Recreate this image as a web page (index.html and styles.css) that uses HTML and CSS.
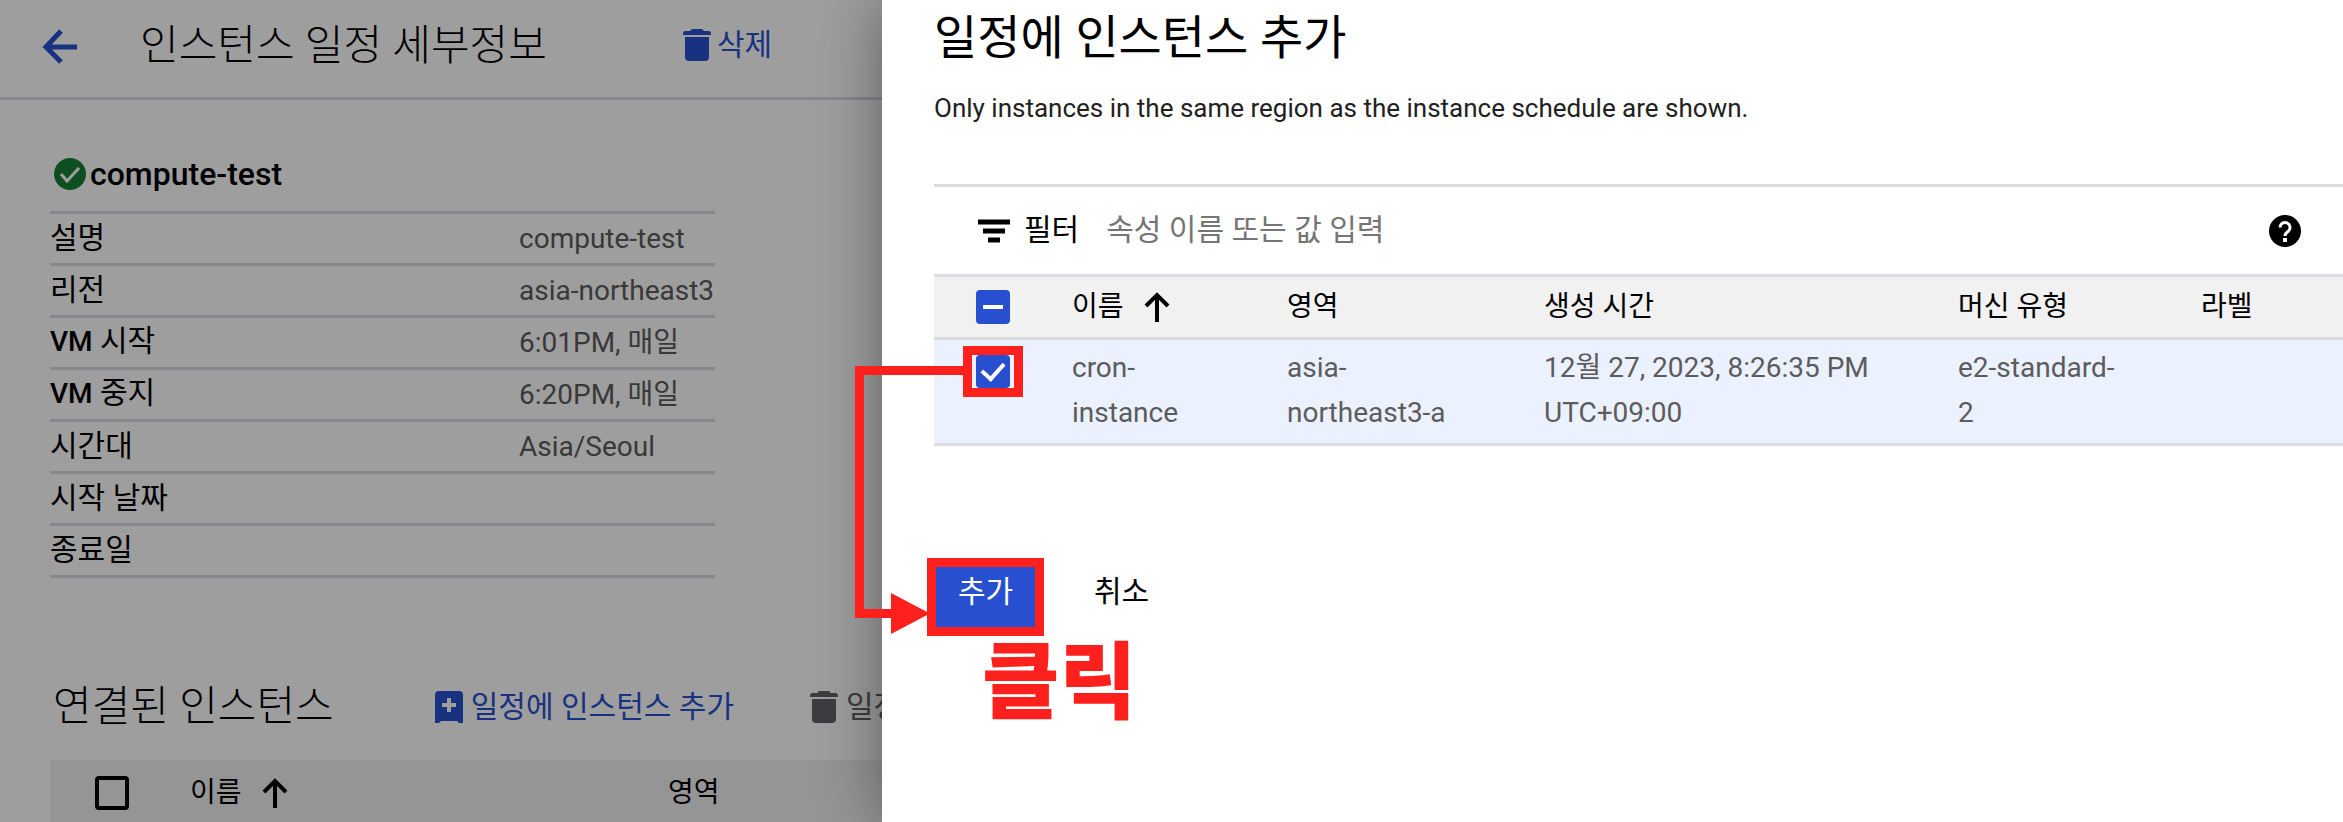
FILE: index.html
```html
<!DOCTYPE html>
<html lang="ko">
<head>
<meta charset="utf-8">
<title>인스턴스 일정 세부정보</title>
<link rel="stylesheet" href="styles.css">
</head>
<body>
<div class="app">
  <main class="page">
    <header class="page-header">
      <button class="icon-button" aria-label="뒤로">
        <svg class="back-icon" viewBox="0 0 36 36"><path d="M19 3 4 19l15 15M4 19h31" fill="none" stroke="currentColor" stroke-width="5"/></svg>
      </button>
      <h1 class="page-title">인스턴스 일정 세부정보</h1>
      <button class="action">
        <svg class="action-icon" viewBox="0 0 28 32"><path d="M9 0h10l2 2h5q2 0 2 4H0q0-4 2-4h5zM2 8h24v20q0 4-4 4H6q-4 0-4-4z" fill="currentColor"/></svg>
        삭제
      </button>
    </header>
    <section class="details">
      <h2 class="resource">
        <svg class="status-icon" viewBox="0 0 32 32"><circle cx="16" cy="16" r="16" fill="#188038"/><path d="m7 16 6 7L25 10" fill="none" stroke="#fff" stroke-width="3"/></svg>
        compute-test
      </h2>
      <table class="facts">
        <tbody>
          <tr><th scope="row">설명</th><td>compute-test</td></tr>
          <tr><th scope="row">리전</th><td>asia-northeast3</td></tr>
          <tr><th scope="row"><b>VM</b> 시작</th><td>6:01PM, 매일</td></tr>
          <tr><th scope="row"><b>VM</b> 중지</th><td>6:20PM, 매일</td></tr>
          <tr><th scope="row">시간대</th><td>Asia/Seoul</td></tr>
          <tr><th scope="row">시작 날짜</th><td></td></tr>
          <tr><th scope="row">종료일</th><td></td></tr>
        </tbody>
      </table>
    </section>
    <section class="attached">
      <div class="attached-header">
        <h2 class="attached-title">연결된 인스턴스</h2>
        <button class="action">
          <svg class="action-icon" viewBox="0 0 28 32"><path fill-rule="evenodd" d="M4 0h20q4 0 4 4v28h-4l-2-2H6l-2 2H0V4q0-4 4-4zM12 7v5H7v4h5v5h4v-5h5v-4h-5V7z" fill="currentColor"/></svg>
          일정에 인스턴스 추가
        </button>
        <button class="action action-disabled">
          <svg class="action-icon" viewBox="0 0 28 32"><path d="M9 0h10l2 2h5q2 0 2 4H0q0-4 2-4h5zM2 8h24v20q0 4-4 4H6q-4 0-4-4z" fill="currentColor"/></svg>
          일정
        </button>
      </div>
      <table class="grid attached-grid">
        <thead>
          <tr>
            <th class="check-cell"><input class="check" type="checkbox" aria-label="모두 선택"></th>
            <th class="name-cell">이름<svg class="sort-icon" viewBox="0 0 26 30"><path d="M13 30V3M2 14 13 3l11 11" fill="none" stroke="currentColor" stroke-width="4"/></svg></th>
            <th>영역</th>
          </tr>
        </thead>
      </table>
    </section>
  </main>

  <div class="scrim"></div>

  <aside class="panel">
    <h2 class="panel-title">일정에 인스턴스 추가</h2>
    <p class="panel-note">Only instances in the same region as the instance schedule are shown.</p>
    <div class="filter">
      <svg class="filter-icon" viewBox="0 0 32 24"><path d="M0 3h32M5 12h22M10 21h12" stroke="currentColor" stroke-width="5"/></svg>
      <label class="filter-label" for="filter">필터</label>
      <input class="filter-input" id="filter" type="text" placeholder="속성 이름 또는 값 입력">
      <button class="icon-button help" aria-label="도움말">
        <svg class="help-icon" viewBox="0 0 32 32"><circle cx="16" cy="16" r="16" fill="currentColor"/><path d="M11 12.500a5 5 0 1 1 8.500 3.500Q16 18.500 16 21" fill="none" stroke="#fff" stroke-width="3"/><path d="M14 23h4v4h-4z" fill="#fff"/></svg>
      </button>
    </div>
    <table class="grid picker">
      <colgroup><col class="c-check"><col class="c-name"><col class="c-zone"><col class="c-time"><col class="c-type"><col></colgroup>
      <thead>
        <tr>
          <th class="check-cell"><input class="check check-mixed" type="checkbox" aria-label="모두 선택"></th>
          <th>이름<svg class="sort-icon" viewBox="0 0 26 30"><path d="M13 30V3M2 14 13 3l11 11" fill="none" stroke="currentColor" stroke-width="4"/></svg></th>
          <th>영역</th>
          <th>생성 시간</th>
          <th>머신 유형</th>
          <th>라벨</th>
        </tr>
      </thead>
      <tbody>
        <tr>
          <td class="check-cell"><span class="marked"><input class="check" type="checkbox" aria-label="cron-instance" checked></span></td>
          <td>cron-<br>instance</td>
          <td>asia-<br>northeast3-a</td>
          <td>12월 27, 2023, 8:26:35 PM<br>UTC+09:00</td>
          <td>e2-standard-<br>2</td>
          <td></td>
        </tr>
      </tbody>
    </table>
    <div class="buttons">
      <button class="primary">추가</button>
      <button class="plain">취소</button>
    </div>
  </aside>

  <svg class="callout-arrow" viewBox="0 0 110 270"><path d="M110 4.500H4.500v243H38" fill="none" stroke="currentColor" stroke-width="9"/><path d="M36 227v41l39-20.500z" fill="currentColor"/></svg>
  <strong class="callout-text">클릭</strong>
</div>
</body>
</html>
```
FILE: styles.css
```css
:root {
  --blue: #274fcf;
  --ink: #000;
  --muted: #5c5c5c;
  --line: #dadce0;
  --mark: #fd201c;
}

* { box-sizing: border-box; }

body {
  margin: 0;
  font-family: Roboto, "Noto Sans CJK KR", sans-serif;
  font-size: 28px;
  color: var(--ink);
  background: #fff;
}

h1, h2, p { margin: 0; font-weight: 400; }

button {
  font: inherit;
  border: 0;
  padding: 0;
  background: none;
  color: inherit;
  cursor: pointer;
}

svg { display: block; flex: none; }

.app {
  position: relative;
  display: grid;
  grid-template-columns: 882px 1fr;
  height: 100vh;
  overflow: hidden;
}

.page { min-width: 0; overflow: hidden; }

.page-header {
  display: flex;
  align-items: center;
  height: 100px;
  padding: 0 42px 6px;
  border-bottom: 3px solid var(--line);
}

.icon-button { color: var(--blue); }
.back-icon { width: 36px; height: 36px; }
.page-title {
  margin: 0 136px 0 62px;
  padding-bottom: 8px;
  font-size: 42px;
  font-weight: 300;
  white-space: nowrap;
}

.action {
  display: flex;
  align-items: center;
  gap: 6px;
  font-size: 30px;
  line-height: 40px;
  color: var(--blue);
  white-space: nowrap;
}
.page-header .action { padding-bottom: 2px; }
.action-icon { width: 28px; height: 32px; }
.action-disabled { color: #5f6368; }

.details { padding: 48px 50px 0; }

.resource {
  display: flex;
  align-items: center;
  gap: 4px;
  height: 52px;
  padding-left: 4px;
  font-size: 32px;
  font-weight: 500;
}
.status-icon { width: 32px; height: 32px; }

.facts {
  width: 665px;
  margin-top: 11px;
  border-collapse: collapse;
  border-top: 3px solid var(--line);
}
.facts tr { height: 52px; border-bottom: 3px solid var(--line); }
.facts th, .facts td { padding: 0; line-height: 40px; text-align: left; white-space: nowrap; }
.facts th { width: 469px; padding-bottom: 2px; font-size: 30px; font-weight: 400; }
.facts b { font-size: 28px; font-weight: 500; }
.facts td { color: var(--muted); }

.attached { padding: 84px 0 0 50px; }
.attached-header { display: flex; align-items: center; height: 84px; padding-left: 3px; }
.attached-title {
  margin-right: 101px;
  padding-bottom: 4px;
  font-size: 42px;
  font-weight: 300;
  white-space: nowrap;
}
.attached-header .action { gap: 8px; padding-top: 6px; }
.attached-header .action + .action { margin-left: 76px; }

.grid { width: 100%; border-collapse: collapse; text-align: left; }
.grid th { padding: 0 0 6px; font-weight: 400; background: #f1f1f1; }
.grid th.check-cell { padding-bottom: 0; }
.grid td { padding: 0; }
.sort-icon { display: inline-block; width: 26px; height: 30px; margin-left: 20px; vertical-align: -6px; }

.attached-grid { margin-top: 14px; }
.attached-grid th { height: 66px; }
.attached-grid .check-cell { width: 140px; padding-left: 45px; }
.attached-grid .name-cell { width: 478px; }

.check {
  appearance: none;
  display: block;
  width: 34px;
  height: 34px;
  margin: 0;
  border: 4px solid var(--ink);
  border-radius: 4px;
}
.check-mixed, .check:checked { border: 0; background: var(--blue); display: grid; place-items: center; }
.check-mixed::after { content: ""; width: 20px; height: 4px; background: #fff; }
.check:checked::after {
  content: "";
  width: 10px;
  height: 18px;
  border: solid #fff;
  border-width: 0 4px 4px 0;
  transform: translateY(-3px) rotate(42deg);
}

.scrim { position: absolute; inset: 0; background: rgba(0, 0, 0, .38); }

.panel {
  position: relative;
  min-width: 0;
  padding-left: 52px;
  background: #fff;
  box-shadow: 0 0 60px rgba(0, 0, 0, .4);
}
.panel-title { padding-top: 4px; font-size: 47px; line-height: 68px; }
.panel-note { margin-top: 16px; font-size: 26px; line-height: 40px; color: #212121; }

.filter {
  display: flex;
  align-items: center;
  height: 90px;
  margin-top: 56px;
  padding: 0 42px 0 44px;
  border-top: 3px solid var(--line);
}
.filter-icon { width: 32px; height: 24px; }
.filter-label { margin: 0 27px 0 14px; padding-bottom: 8px; font-size: 30px; }
.filter-input {
  flex: 1;
  min-width: 0;
  padding: 0 0 2px;
  border: 0;
  outline: 0;
  font: inherit;
  font-size: 30px;
  background: none;
}
.filter-input::placeholder { color: #757575; opacity: 1; }
.help { color: var(--ink); }
.help-icon { width: 32px; height: 32px; }

.picker { table-layout: fixed; border-top: 3px solid var(--line); }
.picker tr { border-bottom: 3px solid var(--line); }
.picker th { height: 63px; }
.picker td {
  padding: 5px 0 8px;
  line-height: 45px;
  vertical-align: top;
  color: var(--muted);
  background: #ebf1ff;
  white-space: nowrap;
}
.c-check { width: 138px; }
.c-name { width: 215px; }
.c-zone { width: 257px; }
.c-time { width: 414px; }
.c-type { width: 243px; }
.picker .check-cell { padding-left: 42px; }
.picker td.check-cell { padding: 6px 0 0 29px; }

.marked {
  display: grid;
  place-items: center;
  width: 60px;
  height: 51px;
  border: 9px solid var(--mark);
}
.marked .check { width: 34px; height: 33px; }

.buttons { display: flex; align-items: center; gap: 50px; margin: 112px 0 0 -7px; }
.primary {
  width: 117px;
  height: 78px;
  padding-bottom: 16px;
  border: 9px solid var(--mark);
  background: var(--blue);
  color: #fff;
  font-size: 30px;
}
.plain { padding-bottom: 16px; font-size: 30px; }

.callout-arrow { position: absolute; left: 855px; top: 366px; width: 110px; height: 270px; color: var(--mark); }
.callout-text {
  position: absolute;
  left: 982px;
  top: 640px;
  font-size: 84px;
  line-height: 88px;
  font-weight: 900;
  color: var(--mark);
}
```
